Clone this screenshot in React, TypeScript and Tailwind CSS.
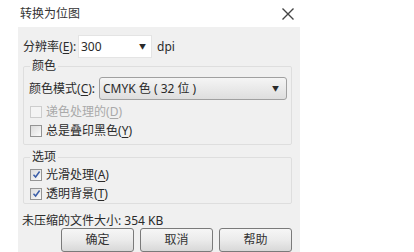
import React from "react";

const font = { fontFamily: '"Noto Sans", "Noto Sans CJK SC", sans-serif' };

const Key = ({ k }: { k: string }) => (
  <span>
    (<span className="underline underline-offset-2">{k}</span>)
  </span>
);

const Check = ({ label, k, checked, disabled }: { label: string; k: string; checked?: boolean; disabled?: boolean }) => (
  <div className={`flex items-center h-[19px] pl-[6px] gap-[4px] ${disabled ? "text-[#a9a9a9]" : "text-[#2a2a2a]"}`}>
    <div
      className={`w-[12px] h-[12px] border flex items-center justify-center ${
        disabled ? "border-[#cdcdcd] bg-[#f4f4f4]" : "border-[#949494] bg-gradient-to-br from-[#dcdcdc] to-[#fbfbfb]"
      }`}
    >
      {checked && (
        <svg width="9" height="9" viewBox="0 0 9 9">
          <path d="M1.5 4.8 L3.6 7 L7.6 1.5" fill="none" stroke="#3a5da8" strokeWidth="1.5" />
        </svg>
      )}
    </div>
    <span>
      {label}
      <Key k={k} />
    </span>
  </div>
);

const Btn = ({ label }: { label: string }) => (
  <button className="w-[73px] h-[24px] rounded-[3px] border border-[#7a7a7a] bg-gradient-to-b from-[#f6f6f6] via-[#ebebeb] to-[#d8d8d8] text-[12px] text-[#333]">
    {label}
  </button>
);

export default function App() {
  return (
    <div className="w-[414px] h-[252px] bg-white overflow-hidden flex flex-col text-[12px] leading-[14px]" style={font}>
      <div className="w-[300px] h-[27px] shrink-0 flex items-center justify-between pl-[20px] pr-[5px]">
        <span className="text-[12px] text-[#333]">转换为位图</span>
        <svg width="14" height="14" viewBox="0 0 14 14">
          <path d="M1.5 1.5 L12.5 12.5 M12.5 1.5 L1.5 12.5" stroke="#444" strokeWidth="1.4" />
        </svg>
      </div>
      <div className="ml-[18px] w-[282px] flex-1 bg-[#f0f0f0] flex flex-col pt-[8px] text-[#2a2a2a]">
        <div className="flex items-center h-[23px] pl-[5px]">
          <span className="w-[55px]">
            分辨率<Key k="E" />:
          </span>
          <div className="w-[74px] h-[23px] bg-white border border-[#e4e4e4] flex items-center justify-between pl-[2px] pr-[5px]">
            <span>300</span>
            <span className="text-[7px]">▼</span>
          </div>
          <span className="ml-[5px]">dpi</span>
        </div>

        <fieldset className="ml-[5px] mt-[1px] w-[269px] border border-[#dedede] rounded-[2px] px-0 pt-[4px] pb-[4px]">
          <legend className="ml-[6px] px-[2px] leading-[14px]">颜色</legend>
          <div className="flex items-center h-[23px] pl-[5px] mb-[2px]">
            <span className="w-[70px]">
              颜色模式<Key k="C" />:
            </span>
            <div className="w-[188px] h-[23px] rounded-[3px] border border-[#a0a0a0] bg-gradient-to-b from-[#f5f5f5] to-[#dedede] flex items-center justify-between pl-[3px] pr-[7px]">
              <span>CMYK 色 ( 32 位 )</span>
              <span className="text-[7px]">▼</span>
            </div>
          </div>
          <Check label="递色处理的" k="D" disabled />
          <Check label="总是叠印黑色" k="Y" />
        </fieldset>

        <fieldset className="ml-[5px] mt-[5px] w-[269px] border border-[#dedede] rounded-[2px] px-0 pt-[1px] pb-0">
          <legend className="ml-[6px] px-[2px] leading-[14px]">选项</legend>
          <Check label="光滑处理" k="A" checked />
          <Check label="透明背景" k="T" checked />
        </fieldset>

        <div className="mt-[10px] pl-[4px]">未压缩的文件大小: 354 KB</div>

        <div className="flex gap-[6px] pl-[43px] mt-0">
          <Btn label="确定" />
          <Btn label="取消" />
          <Btn label="帮助" />
        </div>
      </div>
    </div>
  );
}
